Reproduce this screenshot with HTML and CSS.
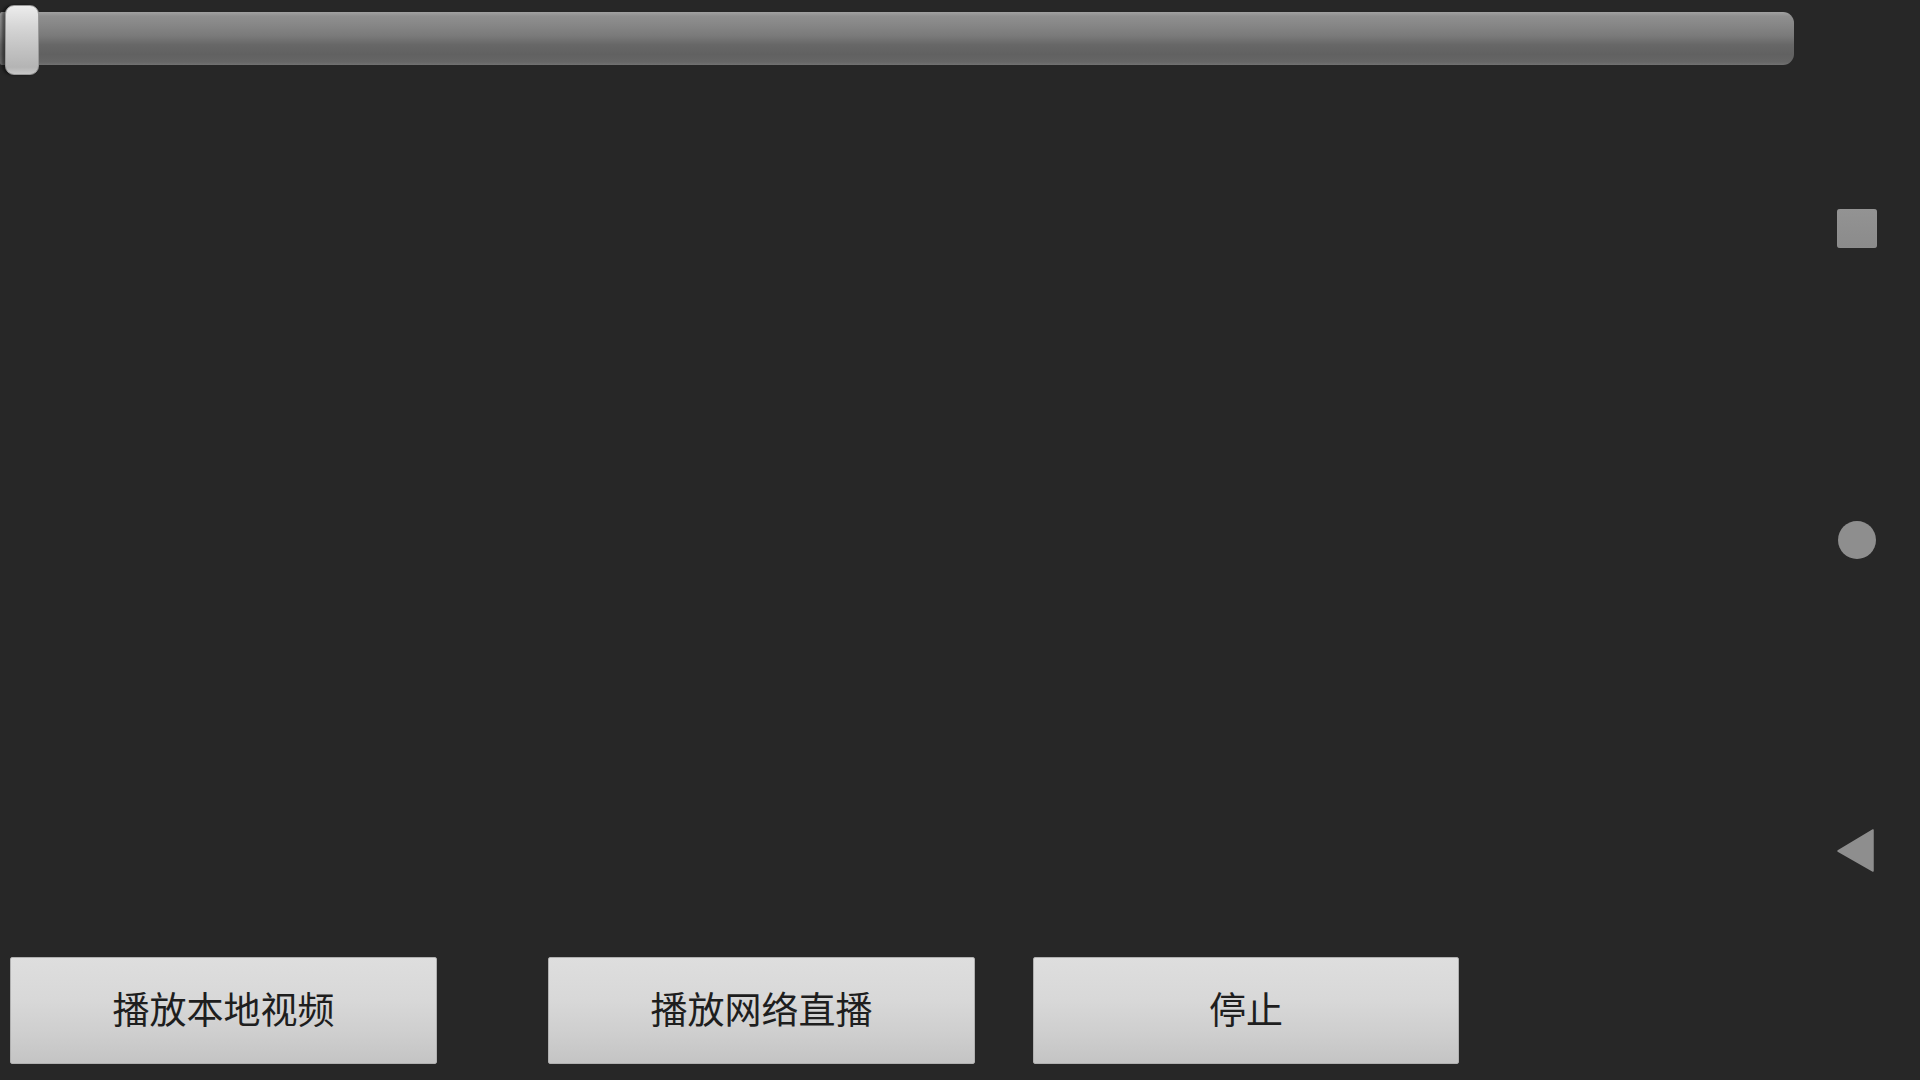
FILE: index.html
```html
<!DOCTYPE html>
<html lang="zh">
<head>
<meta charset="utf-8">
<title>Player</title>
<link rel="stylesheet" href="styles.css">
</head>
<body>
<div class="screen">
  <div class="content">
    <div class="seek">
      <div class="track"></div>
      <div class="thumb"></div>
    </div>
    <div class="spacer"></div>
    <div class="buttons">
      <button class="btn btn-local">播放本地视频</button>
      <button class="btn btn-live">播放网络直播</button>
      <button class="btn btn-stop">停止</button>
    </div>
  </div>
  <nav class="navbar">
    <div class="nav-cell"><span class="nav-square"></span></div>
    <div class="nav-cell"><span class="nav-circle"></span></div>
    <div class="nav-cell">
      <svg class="nav-back" width="37" height="43" viewBox="0 0 37 43"><polygon points="36,1 36,42 1,22" fill="#8e8e8e" stroke="#8e8e8e" stroke-width="1.5" stroke-linejoin="round"/></svg>
    </div>
  </nav>
</div>
</body>
</html>
```

FILE: styles.css
```css
html, body {
  margin: 0;
  padding: 0;
  background: #272727;
}
.screen {
  width: 1920px;
  height: 1080px;
  display: flex;
  background: #272727;
  font-family: "Noto Sans CJK SC", "Noto Sans", sans-serif;
}
.content {
  width: 1794px;
  display: flex;
  flex-direction: column;
}
.seek {
  position: relative;
  height: 80px;
  padding-top: 12px;
  box-sizing: border-box;
}
.track {
  height: 53px;
  border-radius: 2px 11px 11px 2px;
  background: linear-gradient(to bottom, #a2a2a2 0%, #8f8f8f 8%, #868686 25%, #7a7a7a 45%, #676767 62%, #616161 80%, #666666 94%, #727272 100%);
}
.thumb {
  position: absolute;
  left: 5px;
  top: 5px;
  width: 34px;
  height: 70px;
  box-sizing: border-box;
  border-radius: 9px;
  border: 1px solid #9a9a9a;
  background: linear-gradient(to bottom, #ececec 0%, #d6d6d6 30%, #c4c4c4 60%, #b4b4b4 90%, #c8c8c8 100%);
  box-shadow: -3px 0 3px rgba(0,0,0,0.45);
}
.spacer {
  flex: 1;
}
.buttons {
  display: flex;
  height: 107px;
  margin-bottom: 16px;
  padding-left: 10px;
}
.btn {
  width: 427px;
  height: 107px;
  box-sizing: border-box;
  border: 1px solid #b0b0b0;
  border-radius: 2px;
  background: linear-gradient(to bottom, #dedede 0%, #d8d8d8 40%, #cfcfcf 70%, #c4c4c4 100%);
  font-family: "Noto Sans CJK SC", "Noto Sans", sans-serif;
  font-size: 37px;
  color: #1e1e1e;
  padding: 0 0 5px 0;
  line-height: 1;
}
.btn-live {
  margin-left: 111px;
}
.btn-stop {
  margin-left: 58px;
  width: 426px;
}
.navbar {
  width: 126px;
  display: flex;
  flex-direction: column;
  padding: 72px 0;
  box-sizing: border-box;
}
.nav-cell {
  height: 312px;
  display: flex;
  align-items: center;
  justify-content: center;
}
.nav-square {
  display: block;
  width: 40px;
  height: 39px;
  border-radius: 3px;
  background: linear-gradient(to bottom, #939393, #8b8b8b);
  box-shadow: inset 0 0 1px #a0a0a0;
}
.nav-circle {
  display: block;
  width: 38px;
  height: 38px;
  border-radius: 50%;
  background: #8e8e8e;
}
.nav-back {
  display: block;
  margin: -4px 3px 0 0;
}
```
